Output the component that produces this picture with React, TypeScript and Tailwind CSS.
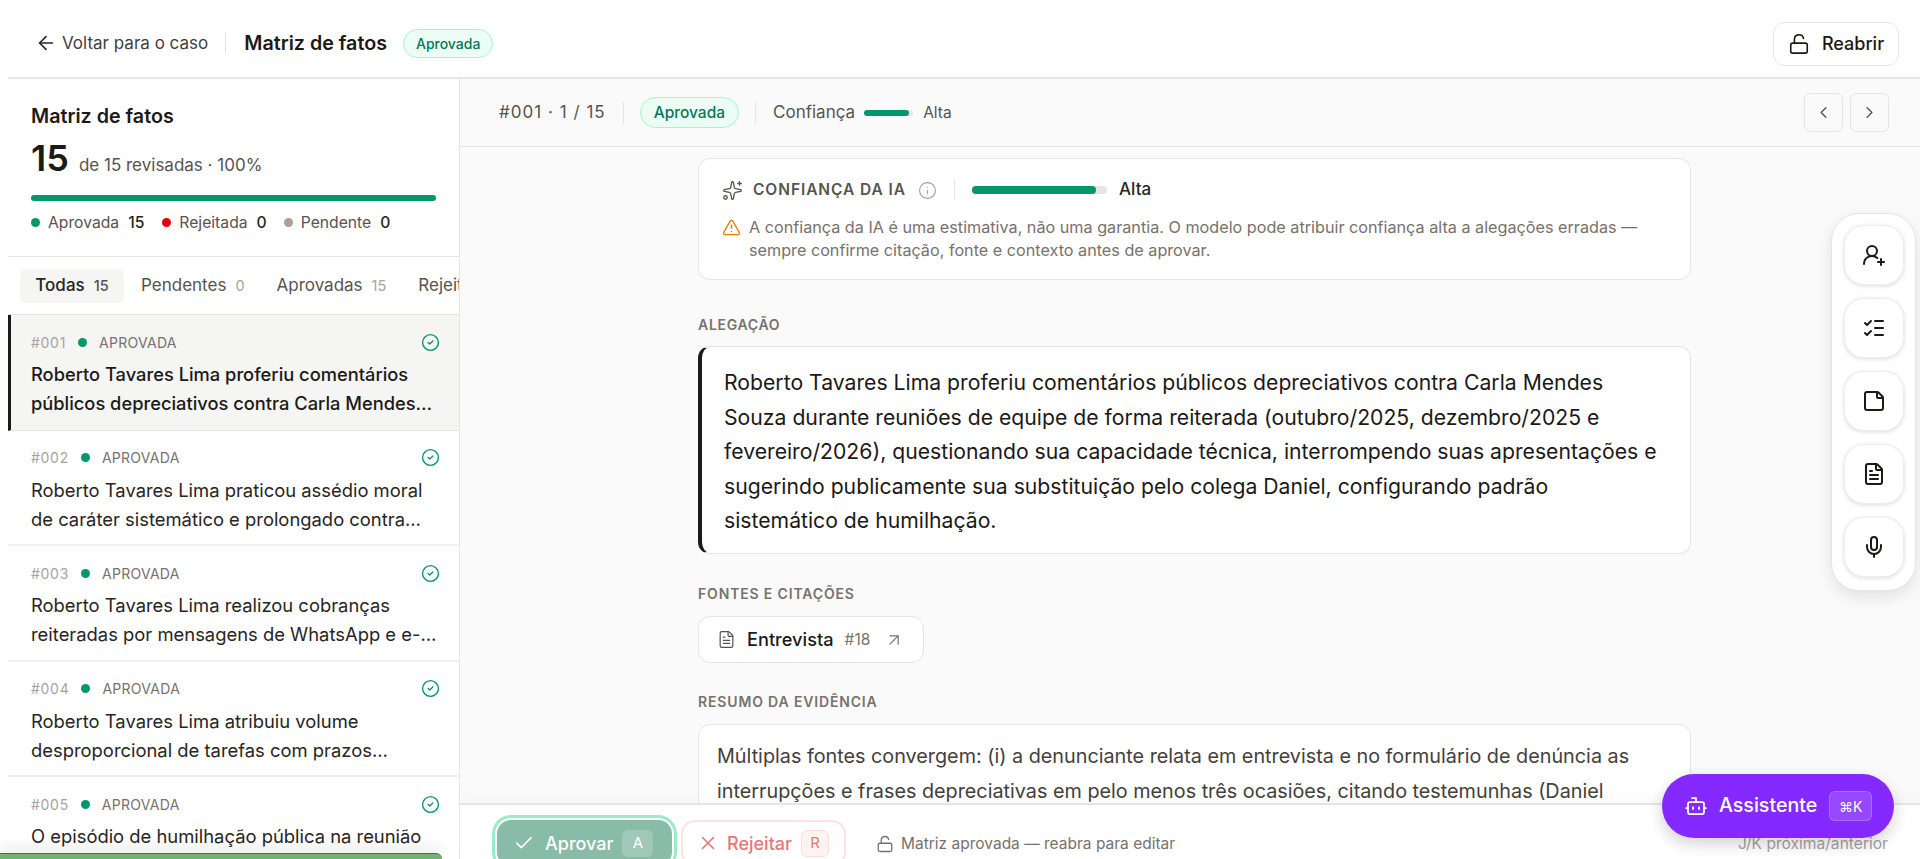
import {
  ArrowLeft,
  ArrowUpRight,
  Bot,
  Check,
  ChevronLeft,
  ChevronRight,
  CircleCheck,
  FileText,
  Info,
  ListChecks,
  LockOpen,
  Mic,
  Sparkles,
  StickyNote,
  TriangleAlert,
  UserRoundPlus,
  X,
} from 'lucide-react';

const facts = [
  { id: '#001', text: 'Roberto Tavares Lima proferiu comentários públicos depreciativos contra Carla Mendes…' },
  { id: '#002', text: 'Roberto Tavares Lima praticou assédio moral de caráter sistemático e prolongado contra…' },
  { id: '#003', text: 'Roberto Tavares Lima realizou cobranças reiteradas por mensagens de WhatsApp e e-…' },
  { id: '#004', text: 'Roberto Tavares Lima atribuiu volume desproporcional de tarefas com prazos…' },
  { id: '#005', text: 'O episódio de humilhação pública na reunião' },
];

const railIcons = [UserRoundPlus, ListChecks, StickyNote, FileText, Mic];

export default function App() {
  return (
    <div className="h-screen overflow-hidden bg-white pl-2 text-[#1c1917] font-['Inter',sans-serif] relative">
      {/* Top bar */}
      <header className="h-[79px] border-b-2 border-[#e7e5e4] flex items-center justify-between pl-[27px] pr-[21px] pt-[10px]">
        <div className="flex items-center">
          <ArrowLeft className="w-[22px] h-[22px] text-[#292524]" strokeWidth={1.75} />
          <span className="ml-[5px] text-[17px] text-[#44403c]">Voltar para o caso</span>
          <div className="w-px h-[22px] bg-[#e7e5e4] ml-[17px]" />
          <h1 className="ml-[18px] text-[19.7px] font-semibold text-[#1c1917]">Matriz de fatos</h1>
          <span className="ml-[16px] h-[29px] px-[12px] flex items-center rounded-full border border-[#a7f3d0] bg-[#ecfdf5] text-[14px] font-medium text-[#047857]">
            Aprovada
          </span>
        </div>
        <button className="h-[44px] w-[126px] rounded-[12px] border border-[#e7e5e4] flex items-center justify-center gap-[12px] text-[18px] font-medium text-[#1c1917]">
          <LockOpen className="w-[22px] h-[22px]" strokeWidth={1.75} />
          Reabrir
        </button>
      </header>

      <div className="flex h-[780px]">
        {/* Sidebar */}
        <aside className="w-[452px] shrink-0 border-r border-[#e7e5e4] flex flex-col overflow-hidden relative">
          <div className="h-[178px] shrink-0 border-b border-[#e7e5e4] px-[23px] pt-[24px]">
            <h2 className="text-[19.7px] font-semibold leading-[26px]">Matriz de fatos</h2>
            <div className="flex items-baseline mt-[11px] leading-[36px]">
              <span className="text-[36px] font-semibold">15</span>
              <span className="ml-[10px] text-[17px] text-[#57534e]">de 15 revisadas · 100%</span>
            </div>
            <div className="h-[6px] w-[405px] rounded-full bg-[#059669] mt-[12px]" />
            <div className="flex items-center mt-[10px] text-[15.7px] text-[#57534e]">
              <span className="w-[9px] h-[9px] rounded-full bg-[#059669]" />
              <span className="ml-[8px]">Aprovada</span>
              <span className="ml-[9px] font-medium text-[#292524]">15</span>
              <span className="ml-[18px] w-[9px] h-[9px] rounded-full bg-[#e7000b]" />
              <span className="ml-[8px]">Rejeitada</span>
              <span className="ml-[9px] font-medium text-[#292524]">0</span>
              <span className="ml-[17px] w-[9px] h-[9px] rounded-full bg-[#a8a29e]" />
              <span className="ml-[8px]">Pendente</span>
              <span className="ml-[9px] font-medium text-[#292524]">0</span>
            </div>
          </div>

          {/* Tabs */}
          <div className="h-[58px] shrink-0 border-b border-[#e7e5e4] flex items-center pl-[12px] gap-[2px] overflow-hidden whitespace-nowrap text-[17px]">
            <div className="h-[34px] w-[104px] shrink-0 rounded-[6px] bg-[#f5f5f4] flex items-center justify-center gap-[9px] font-medium text-[#292524]">
              Todas <span className="text-[14.5px] text-[#57534e]">15</span>
            </div>
            <div className="px-[15px] shrink-0 flex items-center gap-[9px] text-[#57534e]">
              Pendentes <span className="text-[14.5px] text-[#a8a29e]">0</span>
            </div>
            <div className="px-[15px] shrink-0 flex items-center gap-[9px] text-[#57534e]">
              Aprovadas <span className="text-[14.5px] text-[#a8a29e]">15</span>
            </div>
            <div className="px-[15px] shrink-0 flex items-center gap-[9px] text-[#57534e]">
              Rejeitadas <span className="text-[14.5px] text-[#a8a29e]">0</span>
            </div>
          </div>

          {/* List */}
          <div className="flex-1 overflow-hidden">
            {facts.map((fact, i) => (
              <div
                key={fact.id}
                className={
                  i === 0
                    ? 'h-[115.5px] shrink-0 border-b border-[#e7e5e4] border-l-[3px] border-l-[#1c1917] bg-[#f5f5f4] pl-[20px] pr-[19px] pt-[17px]'
                    : 'h-[115.5px] shrink-0 border-b-2 border-[#f0efee] pl-[23px] pr-[19px] pt-[17px]'
                }
              >
                <div className="flex items-center h-[20px]">
                  <span className="text-[14px] tracking-[0.05em] text-[#a8a29e]">{fact.id}</span>
                  <span className="ml-[12px] w-[9px] h-[9px] rounded-full bg-[#059669]" />
                  <span className="ml-[12px] text-[14px] text-[#78716c] tracking-[0.02em]">APROVADA</span>
                  <CircleCheck className="ml-auto w-[19px] h-[19px] text-[#059669]" strokeWidth={1.75} />
                </div>
                <p className={i === 0
                  ? 'mt-[8px] text-[18.3px] leading-[29px] font-medium text-[#1c1917]'
                  : 'mt-[8px] text-[18.4px] leading-[29px] text-[#292524]'}
                >
                  {fact.text}
                </p>
              </div>
            ))}
          </div>
        </aside>

        {/* Main */}
        <main className="flex-1 min-w-0 bg-[#fafafa] flex flex-col">
          <div className="h-[68px] shrink-0 border-b border-[#e7e5e4] flex items-center pl-[39px] pr-[31px]">
            <span className="text-[17px] tracking-[0.06em] text-[#57534e]">#001 · 1 / 15</span>
            <div className="w-px h-[22px] bg-[#e7e5e4] ml-[17px]" />
            <span className="ml-[16px] h-[31px] px-[13px] flex items-center rounded-full border border-[#a7f3d0] bg-[#ecfdf5] text-[15.5px] font-medium text-[#047857]">
              Aprovada
            </span>
            <div className="w-px h-[22px] bg-[#e7e5e4] ml-[16px]" />
            <span className="ml-[17px] text-[17px] text-[#57534e]">Confiança</span>
            <div className="ml-[9px] w-[49px] h-[6px] rounded-full bg-[#e7e5e4]">
              <div className="w-[45px] h-full rounded-full bg-[#059669]" />
            </div>
            <span className="ml-[10px] text-[15.5px] text-[#57534e]">Alta</span>
            <div className="ml-auto flex gap-[7px]">
              <button className="w-[39px] h-[39px] rounded-[6px] border border-[#e7e5e4] flex items-center justify-center">
                <ChevronLeft className="w-[19px] h-[19px] text-[#57534e]" strokeWidth={1.75} />
              </button>
              <button className="w-[39px] h-[39px] rounded-[6px] border border-[#e7e5e4] flex items-center justify-center">
                <ChevronRight className="w-[19px] h-[19px] text-[#57534e]" strokeWidth={1.75} />
              </button>
            </div>
          </div>

          <div className="flex-1 min-h-0 overflow-hidden pl-[238px] pt-[11px]">
            <div className="w-[993px]">
              {/* AI confidence */}
              <section className="h-[122px] rounded-[12px] border border-[#e7e5e4] bg-white px-[23px] pt-[19px]">
                <div className="flex items-center h-[24px]">
                  <Sparkles className="w-[21px] h-[21px] text-[#57534e]" strokeWidth={1.5} />
                  <span className="ml-[10px] text-[15.5px] font-semibold tracking-[0.06em] text-[#57534e]">CONFIANÇA DA IA</span>
                  <Info className="ml-[12px] w-[19px] h-[19px] text-[#a8a29e]" strokeWidth={1.5} />
                  <div className="ml-[17px] w-px h-[20px] bg-[#e7e5e4]" />
                  <div className="ml-[17px] w-[135px] h-[8px] rounded-full bg-[#e7e5e4]">
                    <div className="w-[124px] h-full rounded-full bg-[#059669]" />
                  </div>
                  <span className="ml-[12px] text-[17px] font-medium text-[#292524]">Alta</span>
                </div>
                <div className="flex mt-[14px]">
                  <TriangleAlert className="mt-[2px] shrink-0 w-[19px] h-[19px] text-[#ea7a0c]" strokeWidth={1.75} />
                  <p className="ml-[8px] text-[16.2px] leading-[22.5px] text-[#78716c] whitespace-nowrap">
                    A confiança da IA é uma estimativa, não uma garantia. O modelo pode atribuir confiança alta a alegações erradas —
                    <br />
                    sempre confirme citação, fonte e contexto antes de aprovar.
                  </p>
                </div>
              </section>

              {/* Claim */}
              <h3 className="mt-[36px] text-[14px] leading-[18px] font-semibold tracking-[0.05em] text-[#78716c]">ALEGAÇÃO</h3>
              <section className="mt-[12px] h-[208px] rounded-[12px] border border-[#e7e5e4] border-l-4 border-l-[#1c1917] bg-white pl-[22px] pr-[28px] pt-[18px]">
                <p className="text-[21.2px] leading-[34.6px] text-[#1c1917]">
                  Roberto Tavares Lima proferiu comentários públicos depreciativos contra Carla Mendes Souza durante reuniões de equipe de forma reiterada (outubro/2025, dezembro/2025 e fevereiro/2026), questionando sua capacidade técnica, interrompendo suas apresentações e sugerindo publicamente sua substituição pelo colega Daniel, configurando padrão sistemático de humilhação.
                </p>
              </section>

              {/* Sources */}
              <h3 className="mt-[31px] text-[14px] leading-[18px] font-semibold tracking-[0.06em] text-[#78716c]">FONTES E CITAÇÕES</h3>
              <div className="mt-[13px] h-[47px] w-[226px] rounded-[12px] border border-[#e7e5e4] bg-white flex items-center pl-[18px]">
                <FileText className="w-[19px] h-[19px] text-[#57534e]" strokeWidth={1.5} />
                <span className="ml-[11px] text-[18.2px] font-medium text-[#1c1917]">Entrevista</span>
                <span className="ml-[11px] text-[15.5px] text-[#78716c]">#18</span>
                <ArrowUpRight className="ml-[14px] w-[20px] h-[20px] text-[#78716c]" strokeWidth={1.5} />
              </div>

              {/* Evidence summary */}
              <h3 className="mt-[30px] text-[14px] leading-[18px] font-semibold tracking-[0.06em] text-[#78716c]">RESUMO DA EVIDÊNCIA</h3>
              <section className="mt-[13px] h-[120px] rounded-[12px] border border-[#e7e5e4] bg-white px-[18px] pt-[14px]">
                <p className="text-[19.8px] leading-[34.6px] text-[#44403c]">
                  Múltiplas fontes convergem: (i) a denunciante relata em entrevista e no formulário de denúncia as interrupções e frases depreciativas em pelo menos três ocasiões, citando testemunhas (Daniel
                </p>
              </section>
            </div>
          </div>

          {/* Action bar */}
          <div className="h-[56px] shrink-0 border-t-2 border-[#e7e5e4] bg-white shadow-[0_-6px_14px_rgba(0,0,0,0.02)] flex items-start pl-[37px] pr-[32px] pt-[15px] overflow-hidden">
            <button className="shrink-0 h-[46px] w-[175px] rounded-[14px] bg-[#88bba8] ring-3 ring-[#99ecc9] ring-offset-2 ring-offset-white flex items-center pl-[16px] text-white">
              <Check className="w-[22px] h-[22px]" strokeWidth={1.75} />
              <span className="ml-[10px] text-[18px] font-medium">Aprovar</span>
              <span className="ml-[9px] w-[31px] h-[27px] rounded-[6px] bg-white/20 flex items-center justify-center text-[15px]">A</span>
            </button>
            <button className="ml-[9px] shrink-0 h-[46px] w-[165px] rounded-[14px] border-2 border-[#fde2e2] bg-white flex items-center pl-[14px] text-[#e8767a]">
              <X className="w-[22px] h-[22px]" strokeWidth={1.75} />
              <span className="ml-[8px] text-[18px] font-medium">Rejeitar</span>
              <span className="ml-[9px] w-[28px] h-[27px] rounded-[6px] border border-[#fcdcdc] bg-[#fdf3f3] flex items-center justify-center text-[15px]">R</span>
            </button>
            <div className="ml-[30px] mt-[12px] flex items-center text-[15.5px] text-[#78716c] whitespace-nowrap">
              <LockOpen className="w-[18px] h-[18px]" strokeWidth={1.75} />
              <span className="ml-[7px]">Matriz aprovada — reabra para editar</span>
            </div>
            <span className="ml-auto mt-[12px] text-[15.6px] text-[#a8a29e] whitespace-nowrap">J/K próxima/anterior</span>
          </div>
        </main>
      </div>

      {/* Bottom-left strip */}
      <div className="absolute left-0 bottom-0 w-[442px] h-[6px] rounded-tr-[6px] bg-[#72b272] border-t border-[#4a6b4a] shadow-[0_-4px_14px_rgba(0,0,0,0.14)]" />

      {/* Floating rail */}
      <div className="absolute left-[1831px] top-[213px] w-[85px] h-[378px] rounded-[28px] bg-white border border-[#e7e5e4] shadow-[0_6px_16px_rgba(0,0,0,0.1)] flex flex-col items-center gap-[13px] pt-[11px]">
        {railIcons.map((Icon, i) => (
          <button key={i} className="w-[60px] h-[60px] rounded-[20px] bg-white border border-[#f0efee] shadow-[0_1px_4px_rgba(0,0,0,0.14)] flex items-center justify-center">
            <Icon className="w-[24px] h-[24px] text-[#1c1917]" strokeWidth={2} />
          </button>
        ))}
      </div>

      {/* Assistant */}
      <button className="absolute left-[1662px] top-[774px] w-[232px] h-[64px] rounded-full bg-[#8429ff] shadow-[0_6px_16px_rgba(0,0,0,0.18)] flex items-center pl-[22px] text-white">
        <Bot className="w-[24px] h-[24px]" strokeWidth={1.75} />
        <span className="ml-[11px] text-[19.6px] font-medium">Assistente</span>
        <span className="ml-[12px] w-[43px] h-[30px] rounded-[6px] bg-white/15 border border-white/20 flex items-center justify-center text-[14px]">⌘K</span>
      </button>
    </div>
  );
}
